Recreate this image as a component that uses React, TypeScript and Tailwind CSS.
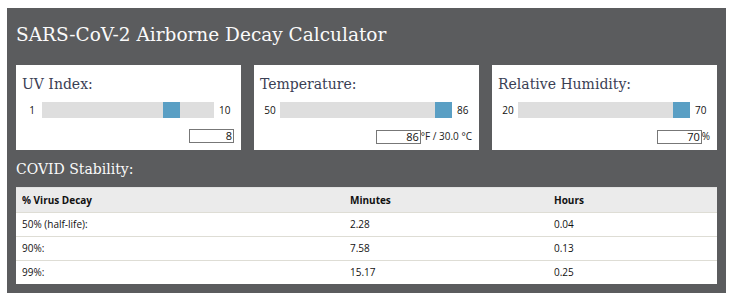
const sliders = [
  { label: "UV Index:", min: 1, max: 10, value: 8, unit: "" },
  { label: "Temperature:", min: 50, max: 86, value: 86, unit: "°F / 30.0 °C" },
  { label: "Relative Humidity:", min: 20, max: 70, value: 70, unit: "%" },
];

const rows = [
  ["50% (half-life):", "2.28", "0.04"],
  ["90%:", "7.58", "0.13"],
  ["99%:", "15.17", "0.25"],
];

function SliderCard({ label, min, max, value, unit }: (typeof sliders)[number]) {
  const trackW = 172;
  const thumbW = 17;
  const left = ((value - min) / (max - min)) * (trackW - thumbW);
  return (
    <div className="h-[85px] bg-white pl-[6px] pr-[7px] pt-[8px]">
      <div className="font-['DejaVu_Serif',serif] text-[14px] leading-[22px] text-[#3a4054]">{label}</div>
      <div className="mt-[7px] flex h-4 items-center text-[10px] text-[#111] font-['Open_Sans',sans-serif]">
        <span className="w-[20px] text-center">{min}</span>
        <div className="relative h-4 w-[172px] bg-[#dedede]">
          <div className="absolute top-0 h-4 w-[17px] bg-[#5a9fc4]" style={{ left }} />
        </div>
        <span className="ml-[5px]">{max}</span>
      </div>
      <div className="mt-[11px] flex items-center justify-end font-['Open_Sans',sans-serif] text-[10px] text-[#222]">
        <div className="h-[14px] w-[45px] border border-[#777] bg-white pr-[1px] text-right text-[11px] leading-[12px] text-[#111]">
          {value}
        </div>
        {unit && <span>{unit}</span>}
      </div>
    </div>
  );
}

export default function App() {
  return (
    <div className="h-[303px] w-[733px] bg-white pl-[7px] pt-[8px]">
      <div className="h-[285px] w-[719px] bg-[#5b5c5e] px-[9px]">
        <h1 className="pt-[14px] pb-[18px] font-['DejaVu_Serif',serif] text-[18.5px] leading-[25px] text-[#fafafa]">
          SARS-CoV-2 Airborne Decay Calculator
        </h1>
        <div className="grid grid-cols-3 gap-[13px]">
          {sliders.map((s) => (
            <SliderCard key={s.label} {...s} />
          ))}
        </div>
        <h2 className="pt-[9px] pb-[8px] font-['DejaVu_Serif',serif] text-[14px] leading-[20px] text-[#fafafa]">
          COVID Stability:
        </h2>
        <div className="bg-white font-['Open_Sans',sans-serif] text-[10px] text-[#111]">
          <div className="grid h-[25px] grid-cols-[328px_204px_1fr] items-center border-t border-[#e2e2e2] bg-[#ebebeb] font-bold">
            <span className="pl-[6px]">% Virus Decay</span>
            <span className="pl-[6px]">Minutes</span>
            <span className="pl-[6px]">Hours</span>
          </div>
          {rows.map((r) => (
            <div key={r[0]} className="grid h-[24px] grid-cols-[328px_204px_1fr] items-center border-t border-[#deddd5]">
              {r.map((c, i) => (
                <span key={i} className="pl-[6px]">{c}</span>
              ))}
            </div>
          ))}
        </div>
      </div>
    </div>
  );
}
